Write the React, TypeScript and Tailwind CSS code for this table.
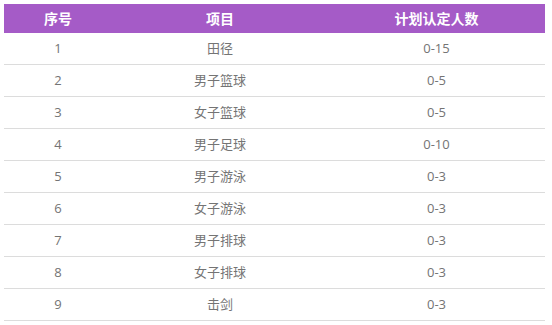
import React from "react";

const rows = [
  ["1", "田径", "0-15"],
  ["2", "男子篮球", "0-5"],
  ["3", "女子篮球", "0-5"],
  ["4", "男子足球", "0-10"],
  ["5", "男子游泳", "0-3"],
  ["6", "女子游泳", "0-3"],
  ["7", "男子排球", "0-3"],
  ["8", "女子排球", "0-3"],
  ["9", "击剑", "0-3"],
];

export default function App() {
  return (
    <div
      className="w-[552px] h-[325px] bg-white pt-[4px] pl-[4px]"
      style={{ fontFamily: '"Open Sans", "Noto Sans CJK SC", sans-serif' }}
    >
      <div className="w-[541px]">
        <div className="grid grid-cols-[108px_216px_217px] h-[29px] bg-[#a55bc7] text-white font-bold text-[14px] items-center text-center">
          <div>序号</div>
          <div>项目</div>
          <div>计划认定人数</div>
        </div>
        {rows.map((r) => (
          <div
            key={r[0]}
            className="grid grid-cols-[108px_216px_217px] h-[32px] border-b border-[#dcdcdc] text-[#747474] text-[13px] items-center text-center"
          >
            <div>{r[0]}</div>
            <div>{r[1]}</div>
            <div>{r[2]}</div>
          </div>
        ))}
      </div>
    </div>
  );
}
